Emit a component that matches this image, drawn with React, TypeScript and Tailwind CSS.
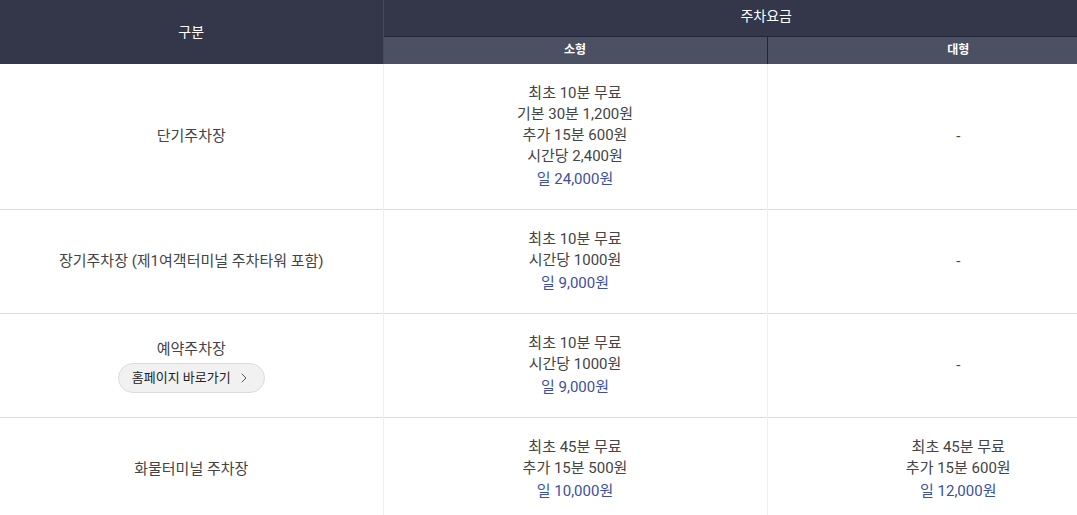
import { ChevronRight } from "lucide-react"

type Line = { text: string; day?: boolean }

const rows: { name: string; link?: boolean; small: Line[]; large: Line[] | null }[] = [
  {
    name: "단기주차장",
    small: [
      { text: "최초 10분 무료" },
      { text: "기본 30분 1,200원" },
      { text: "추가 15분 600원" },
      { text: "시간당 2,400원" },
      { text: "일 24,000원", day: true },
    ],
    large: null,
  },
  {
    name: "장기주차장 (제1여객터미널 주차타워 포함)",
    small: [{ text: "최초 10분 무료" }, { text: "시간당 1000원" }, { text: "일 9,000원", day: true }],
    large: null,
  },
  {
    name: "예약주차장",
    link: true,
    small: [{ text: "최초 10분 무료" }, { text: "시간당 1000원" }, { text: "일 9,000원", day: true }],
    large: null,
  },
  {
    name: "화물터미널 주차장",
    small: [{ text: "최초 45분 무료" }, { text: "추가 15분 500원" }, { text: "일 10,000원", day: true }],
    large: [{ text: "최초 45분 무료" }, { text: "추가 15분 600원" }, { text: "일 12,000원", day: true }],
  },
]

function Fee({ lines }: { lines: Line[] | null }) {
  if (!lines) return <p className="leading-[21px]">-</p>
  return (
    <div>
      {lines.map((l, i) => (
        <p key={i} className={l.day ? "mt-[2px] leading-[21px] text-[#3d50a0]" : "leading-[21px]"}>
          {l.text}
        </p>
      ))}
    </div>
  )
}

export default function App() {
  return (
    <div
      className="w-[1077px] overflow-hidden bg-white"
      style={{ fontFamily: "Roboto, 'Noto Sans CJK KR', sans-serif" }}
    >
      <table className="w-[1149px] table-fixed border-collapse text-center text-[15px] text-[#444]">
        <colgroup>
          <col className="w-[383px]" />
          <col className="w-[384px]" />
          <col className="w-[382px]" />
        </colgroup>
        <thead>
          <tr className="h-[36px] bg-[#343749] text-[14px] text-white">
            <th rowSpan={2} className="border-r border-[#474a5b] font-normal">
              구분
            </th>
            <th colSpan={2} className="border-b border-[#23253a] pb-[2px] font-normal">
              주차요금
            </th>
          </tr>
          <tr className="h-[28px] bg-[#4b5063] text-[12px] font-bold text-white">
            <th className="border-r border-[#23253a]">소형</th>
            <th>대형</th>
          </tr>
        </thead>
        <tbody>
          {rows.map((r, i) => (
            <tr key={i} className="border-b border-[#dddddd]">
              <td className="border-r border-[#efefef] py-[19px]">
                <p className="leading-[21px]">{r.name}</p>
                {r.link && (
                  <button className="mx-auto mt-[3px] flex h-[30px] items-center gap-[5px] rounded-full border border-[#dcdcdc] bg-[#f1f1f1] pl-[13px] pr-[12px] text-[13px] text-[#222]">
                    홈페이지 바로가기
                    <ChevronRight size={16} strokeWidth={1.5} className="text-[#555]" />
                  </button>
                )}
              </td>
              <td className="border-r border-[#efefef] py-[19px]">
                <Fee lines={r.small} />
              </td>
              <td className="py-[19px]">
                <Fee lines={r.large} />
              </td>
            </tr>
          ))}
        </tbody>
      </table>
    </div>
  )
}
